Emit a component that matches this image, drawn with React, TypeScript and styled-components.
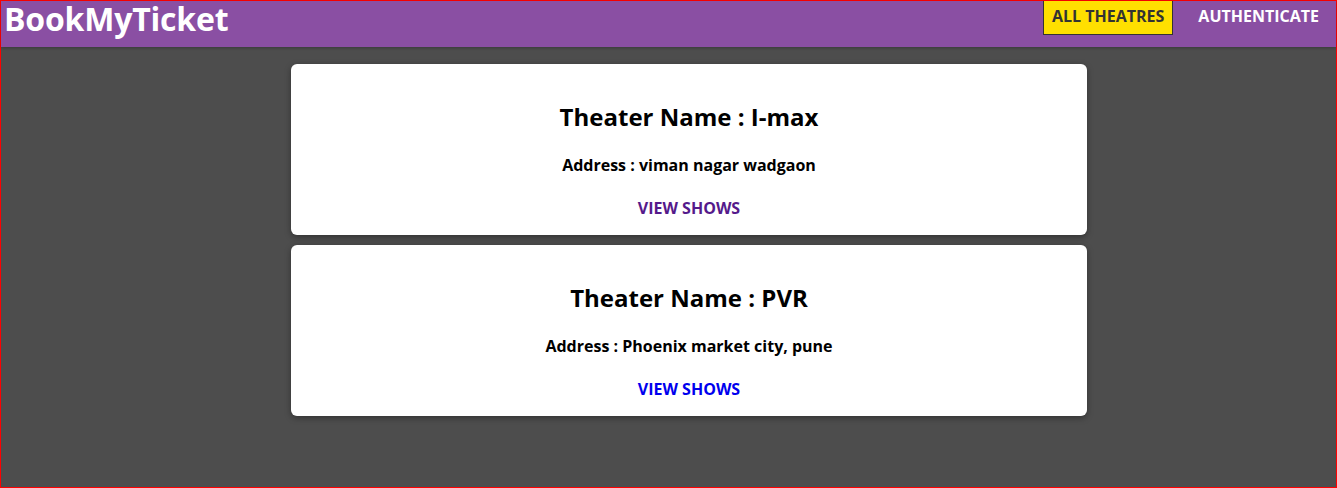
import React from "react";
import styled, { createGlobalStyle } from "styled-components";

const Global = createGlobalStyle`
  html, body { margin: 0; padding: 0; }
  body {
    font-family: "Open Sans", "Noto Sans", sans-serif;
    background: #4d4d4d;
  }
  * { box-sizing: border-box; }
`;

const Page = styled.div`
  height: 488px;
  border: 1px solid #ff0000;
  background: #4d4d4d;
  display: flex;
  flex-direction: column;
`;

const Header = styled.header`
  height: 46px;
  background: #8a4fa3;
  display: flex;
  align-items: flex-start;
  justify-content: space-between;
  padding: 0 8px 0 3px;
  box-shadow: 0 1px 3px rgba(0, 0, 0, 0.25);
`;

const Logo = styled.div`
  color: #fff;
  font-weight: 700;
  font-size: 32px;
  line-height: 40px;
  margin-top: -2px;
  letter-spacing: -0.2px;
`;

const Nav = styled.nav`
  display: flex;
  align-items: flex-start;
  gap: 16px;
`;

const NavItem = styled.a<{ $active?: boolean }>`
  display: block;
  font-size: 16px;
  font-weight: 700;
  line-height: 31px;
  height: 34px;
  padding: 0 8px;
  text-decoration: none;
  color: ${(p) => (p.$active ? "#333" : "#fff")};
  background: ${(p) => (p.$active ? "#ffe000" : "transparent")};
  border: 1px solid ${(p) => (p.$active ? "#333" : "transparent")};
  border-top: none;
`;

const Main = styled.main`
  display: flex;
  flex-direction: column;
  align-items: center;
  gap: 10px;
  padding: 17px 0 0 41px;
`;

const Card = styled.section`
  width: 796px;
  background: #fff;
  border-radius: 6px;
  box-shadow: 0 2px 6px rgba(0, 0, 0, 0.35);
  display: flex;
  flex-direction: column;
  align-items: center;
  padding: 36px 16px 16px;
  color: #000;
`;

const Title = styled.h2`
  margin: 0;
  font-size: 24px;
  line-height: 33px;
  font-weight: 700;
`;

const Address = styled.p`
  margin: 21px 0 0;
  font-size: 16px;
  line-height: 22px;
  font-weight: 700;
`;

const ViewLink = styled.a<{ $visited?: boolean }>`
  margin-top: 21px;
  font-size: 16px;
  line-height: 22px;
  font-weight: 700;
  text-transform: uppercase;
  text-decoration: none;
  color: ${(p) => (p.$visited ? "#551a8b" : "#0000ee")};
`;

const theatres = [
  { name: "I-max", address: "viman nagar wadgaon", visited: true },
  { name: "PVR", address: "Phoenix market city, pune", visited: false },
];

export default function App() {
  return (
    <>
      <Global />
      <Page>
        <Header>
          <Logo>BookMyTicket</Logo>
          <Nav>
            <NavItem $active>ALL THEATRES</NavItem>
            <NavItem>AUTHENTICATE</NavItem>
          </Nav>
        </Header>
        <Main>
          {theatres.map((t) => (
            <Card key={t.name}>
              <Title>Theater Name : {t.name}</Title>
              <Address>Address : {t.address}</Address>
              <ViewLink $visited={t.visited}>View Shows</ViewLink>
            </Card>
          ))}
        </Main>
      </Page>
    </>
  );
}
